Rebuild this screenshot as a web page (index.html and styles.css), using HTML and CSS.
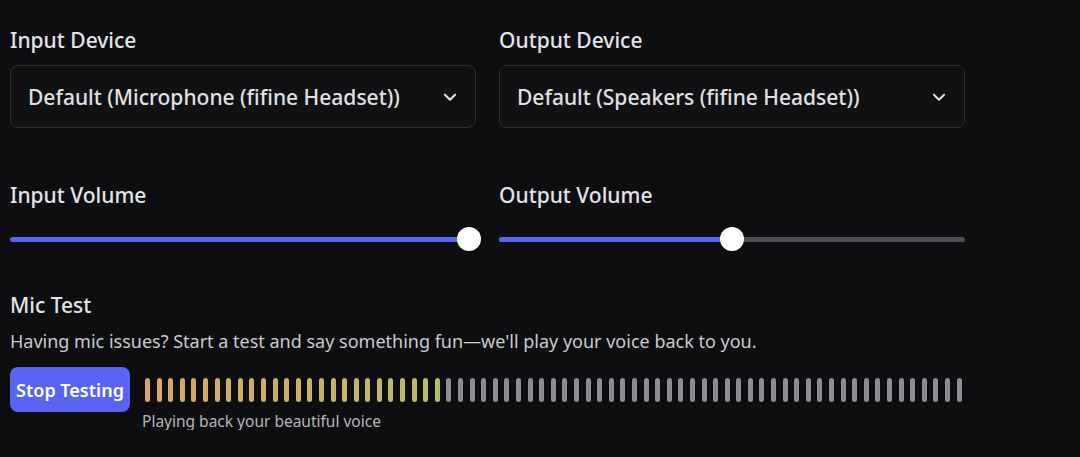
FILE: index.html
```html
<!DOCTYPE html>
<html lang="en">
<head>
    <meta charset="UTF-8">
    <meta name="viewport" content="width=device-width, initial-scale=1.0">
    <title>Voice Settings</title>
    <link rel="stylesheet" href="styles.css">
</head>
<body>
    <div class="settings">
        <div class="row devices">
            <div class="field">
                <div class="label">Input Device</div>
                <div class="select">
                    <span>Default (Microphone (fifine Headset))</span>
                    <svg class="chevron" width="22" height="22" viewBox="0 0 24 24"><path d="M6.5 9.5l5.5 5.5 5.5-5.5" fill="none" stroke="#e0e1e5" stroke-width="2.3" stroke-linecap="round" stroke-linejoin="round"/></svg>
                </div>
            </div>
            <div class="field">
                <div class="label">Output Device</div>
                <div class="select">
                    <span>Default (Speakers (fifine Headset))</span>
                    <svg class="chevron" width="22" height="22" viewBox="0 0 24 24"><path d="M6.5 9.5l5.5 5.5 5.5-5.5" fill="none" stroke="#e0e1e5" stroke-width="2.3" stroke-linecap="round" stroke-linejoin="round"/></svg>
                </div>
            </div>
        </div>
        <div class="row volumes">
            <div class="field">
                <div class="label">Input Volume</div>
                <div class="slider">
                    <div class="track"><div class="fill" style="width: 100%"></div></div>
                    <div class="thumb" style="left: 98.4%"></div>
                </div>
            </div>
            <div class="field">
                <div class="label">Output Volume</div>
                <div class="slider">
                    <div class="track"><div class="fill" style="width: 50%"></div></div>
                    <div class="thumb" style="left: 50%"></div>
                </div>
            </div>
        </div>
        <div class="mic-test">
            <div class="label">Mic Test</div>
            <p class="desc">Having mic issues? Start a test and say something fun—we'll play your voice back to you.</p>
            <div class="test-row">
                <button class="btn">Stop Testing</button>
                <div class="meter">
                    <div class="bars" id="bars"></div>
                    <div class="caption">Playing back your beautiful voice</div>
                </div>
            </div>
        </div>
    </div>
    <script>
        const total = 71;
        const active = 26;
        const from = [216, 166, 99];
        const to = [184, 189, 106];
        const bars = document.getElementById('bars');
        for (let i = 0; i < total; i++) {
            const bar = document.createElement('span');
            bar.className = 'bar';
            if (i < active) {
                const t = i / (active - 1);
                const c = from.map((v, k) => Math.round(v + (to[k] - v) * t));
                bar.style.background = `rgb(${c.join(',')})`;
            }
            bars.appendChild(bar);
        }
    </script>
</body>
</html>
```

FILE: styles.css
```css
body {
    margin: 0;
    background-color: #0e0e11;
    color: #e0e1e5;
    font-family: 'Noto Sans', 'Open Sans', sans-serif;
}
.settings {
    width: 955px;
    padding: 28px 0 0 10px;
}
.row {
    display: grid;
    grid-template-columns: 466px 466px;
    column-gap: 23px;
}
.label {
    font-size: 21px;
    font-weight: 500;
    line-height: 24px;
    color: #e3e4e8;
}
.devices .label {
    margin-bottom: 13px;
}
.select {
    height: 61px;
    border: 1px solid #2c2d33;
    border-radius: 8px;
    background-color: #111114;
    display: flex;
    align-items: center;
    justify-content: space-between;
    padding: 0 14px 0 17px;
    font-size: 21px;
    font-weight: 500;
    color: #e0e1e5;
}
.chevron {
    display: block;
}
.volumes {
    margin-top: 55px;
}
.slider {
    position: relative;
    height: 24px;
    margin-top: 20px;
    display: flex;
    align-items: center;
}
.track {
    width: 100%;
    height: 5px;
    border-radius: 3px;
    background-color: #4e4f58;
    overflow: hidden;
}
.fill {
    height: 100%;
    background-color: #5865f2;
}
.thumb {
    position: absolute;
    top: 0;
    width: 24px;
    height: 24px;
    margin-left: -12px;
    border-radius: 50%;
    background-color: #ffffff;
}
.mic-test {
    margin-top: 42px;
}
.desc {
    margin: 13px 0 0;
    font-size: 18px;
    line-height: 22px;
    color: #c9cace;
}
.test-row {
    display: flex;
    align-items: flex-start;
    margin-top: 15px;
}
.btn {
    width: 120px;
    height: 45px;
    border: none;
    border-radius: 8px;
    background-color: #5865f2;
    color: #ffffff;
    font-family: inherit;
    font-size: 18px;
    font-weight: 600;
    padding: 0;
    cursor: pointer;
}
.meter {
    margin-left: 15px;
    padding-top: 11px;
}
.bars {
    display: flex;
    justify-content: space-between;
    width: 817px;
    height: 24px;
}
.bar {
    width: 5px;
    height: 24px;
    border-radius: 3px;
    background-color: #8b8c94;
}
.caption {
    margin-top: 10px;
    margin-left: -3px;
    font-size: 15.5px;
    line-height: 18px;
    color: #b5b6bc;
}
```
